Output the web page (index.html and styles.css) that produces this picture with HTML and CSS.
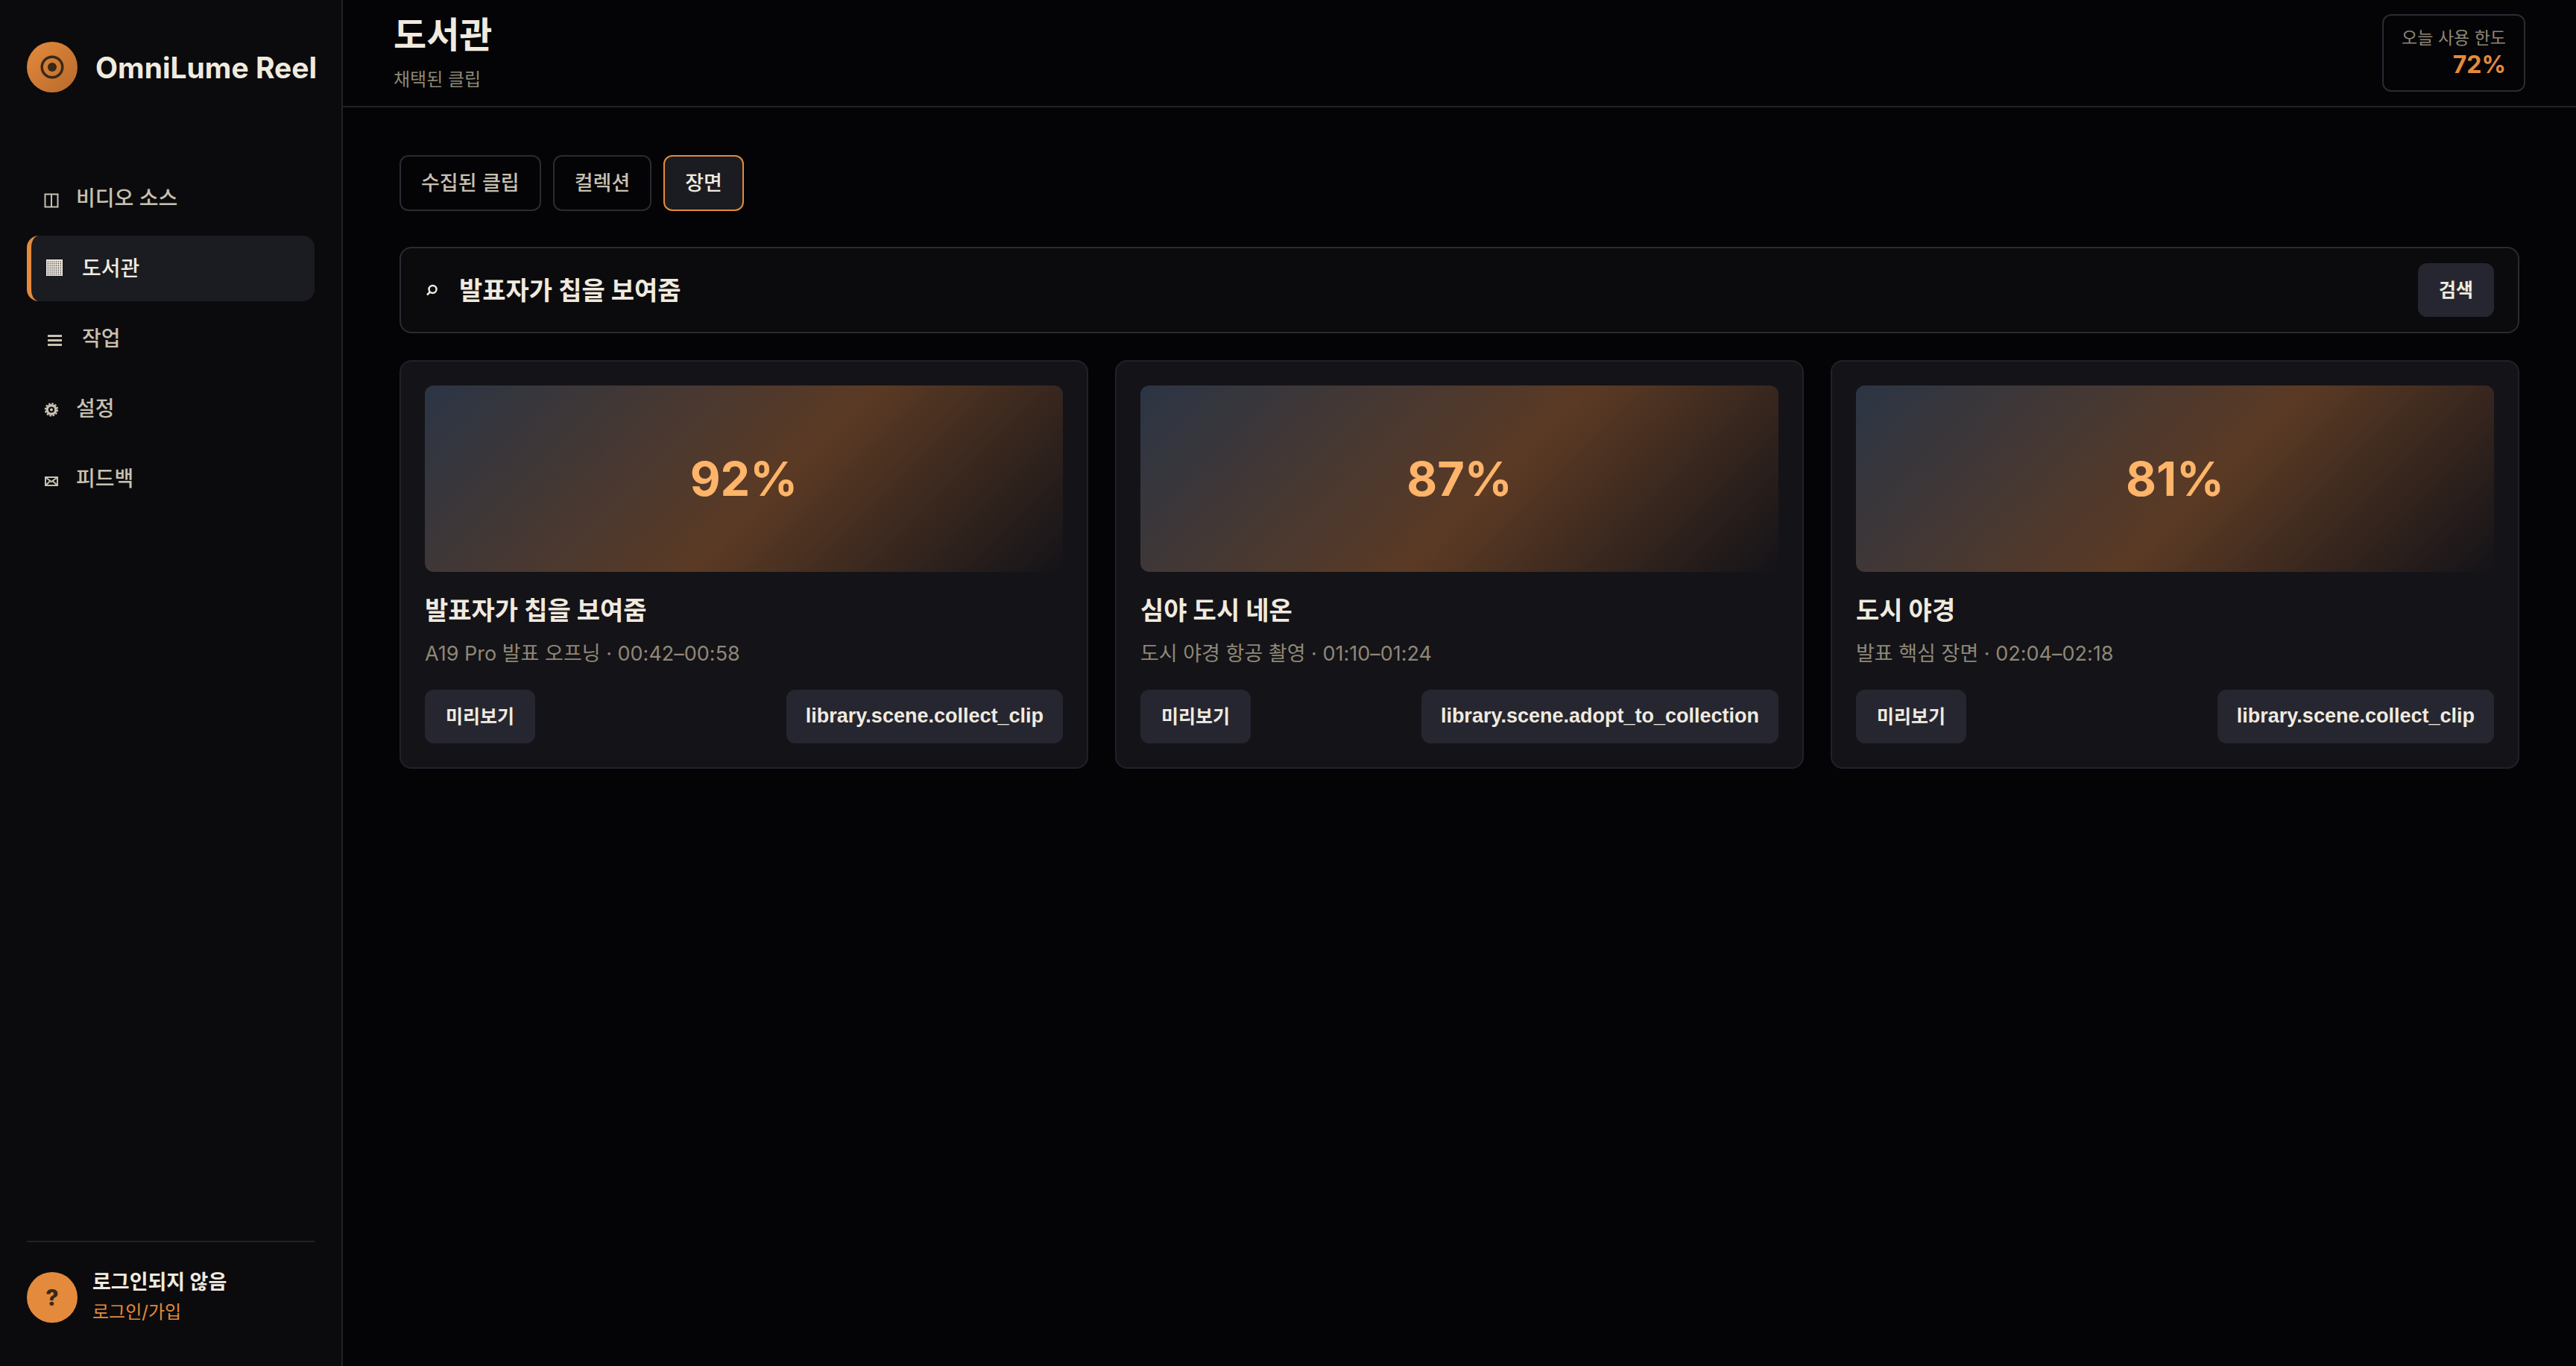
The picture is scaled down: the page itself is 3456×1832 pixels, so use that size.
FILE: index.html
```html
<!DOCTYPE html>
<html lang="ko">
<head>
    <meta charset="UTF-8">
    <meta name="viewport" content="width=device-width, initial-scale=1">
    <title>OmniLume Reel</title>
    <link rel="stylesheet" href="styles.css">
</head>
<body>
    <div class="app">
        <aside class="sidebar">
            <div class="brand">
                <span class="brand-mark">
                    <svg width="32" height="32" viewBox="0 0 32 32">
                        <circle cx="16" cy="16" r="13.8" fill="none" stroke="currentColor" stroke-width="3.5"/>
                        <circle cx="16" cy="16" r="6" fill="currentColor"/>
                    </svg>
                </span>
                <span class="brand-name">OmniLume Reel</span>
            </div>

            <nav class="nav">
                <a class="nav-item" href="#">
                    <svg class="nav-icon" viewBox="0 0 24 32">
                        <path d="M2.5 12.5h17v17h-17zM11 12.5v17" fill="none" stroke="currentColor" stroke-width="2"/>
                    </svg>
                    비디오 소스
                </a>
                <a class="nav-item active" href="#">
                    <svg class="nav-icon wide" viewBox="0 0 32 32">
                        <defs>
                            <pattern id="mesh" x="5" y="7.5" width="2.83" height="2.83" patternUnits="userSpaceOnUse">
                                <rect x="0.7" y="0.7" width="1.3" height="1.3" fill="#1b1c21"/>
                            </pattern>
                        </defs>
                        <path d="M4 6h22v22H4z" fill="currentColor"/>
                        <path d="M5 7.5h20v20H5z" fill="url(#mesh)"/>
                    </svg>
                    도서관
                </a>
                <a class="nav-item" href="#">
                    <svg class="nav-icon wide" viewBox="0 0 32 32">
                        <path d="M6 14.5h19M6 20.5h19M6 26.5h19" stroke="currentColor" stroke-width="3"/>
                    </svg>
                    작업
                </a>
                <a class="nav-item" href="#">
                    <svg class="nav-icon" viewBox="0 0 24 32">
                        <circle cx="11" cy="19.5" r="5.8" fill="none" stroke="currentColor" stroke-width="3.4"/>
                        <circle cx="11" cy="19.5" r="8.2" fill="none" stroke="currentColor" stroke-width="2" stroke-dasharray="2.5 1.8"/>
                        <circle cx="11" cy="19.5" r="2" fill="currentColor"/>
                    </svg>
                    설정
                </a>
                <a class="nav-item" href="#">
                    <svg class="nav-icon" viewBox="0 0 24 32">
                        <path d="M3 16h16v11H3z" fill="none" stroke="currentColor" stroke-width="2"/>
                        <path d="M4 17l7 5 7-5M4 26l5-4.5M18 26l-5-4.5" fill="none" stroke="currentColor" stroke-width="2"/>
                    </svg>
                    피드백
                </a>
            </nav>

            <div class="account">
                <span class="avatar">?</span>
                <div class="account-text">
                    <strong>로그인되지 않음</strong>
                    <a href="#">로그인/가입</a>
                </div>
            </div>
        </aside>

        <div class="main">
            <header class="topbar">
                <div>
                    <h1>도서관</h1>
                    <p class="subtitle">채택된 클립</p>
                </div>
                <div class="quota">
                    <span>오늘 사용 한도</span>
                    <strong>72%</strong>
                </div>
            </header>

            <main class="content">
                <div class="tabs">
                    <button class="tab">수집된 클립</button>
                    <button class="tab">컬렉션</button>
                    <button class="tab active">장면</button>
                </div>

                <form class="search">
                    <svg class="search-icon" viewBox="0 0 18 18">
                        <circle cx="10.5" cy="8" r="5" fill="none" stroke="currentColor" stroke-width="2.5"/>
                        <path d="M7 11.5l-4 4" stroke="currentColor" stroke-width="2.5"/>
                    </svg>
                    <input class="search-input" type="text" aria-label="장면 검색" value="발표자가 칩을 보여줌">
                    <button class="btn" type="button">검색</button>
                </form>

                <section class="cards">
                    <article class="card">
                        <div class="thumb">92%</div>
                        <h2>발표자가 칩을 보여줌</h2>
                        <p class="meta">A19 Pro 발표 오프닝 · 00:42–00:58</p>
                        <div class="actions">
                            <button class="btn">미리보기</button>
                            <button class="btn btn-command">library.scene.collect_clip</button>
                        </div>
                    </article>
                    <article class="card">
                        <div class="thumb">87%</div>
                        <h2>심야 도시 네온</h2>
                        <p class="meta">도시 야경 항공 촬영 · 01:10–01:24</p>
                        <div class="actions">
                            <button class="btn">미리보기</button>
                            <button class="btn btn-command">library.scene.adopt_to_collection</button>
                        </div>
                    </article>
                    <article class="card">
                        <div class="thumb">81%</div>
                        <h2>도시 야경</h2>
                        <p class="meta">발표 핵심 장면 · 02:04–02:18</p>
                        <div class="actions">
                            <button class="btn">미리보기</button>
                            <button class="btn btn-command">library.scene.collect_clip</button>
                        </div>
                    </article>
                </section>
            </main>
        </div>
    </div>
</body>
</html>
```
FILE: styles.css
```css
:root {
    --bg: #040406;
    --panel: #0b0b0d;
    --card: #141318;
    --raised: #1b1c21;
    --button: #262631;
    --line: #22212a;
    --line-strong: #2b2a33;
    --text: #f0eadf;
    --text-soft: #c8c0b0;
    --text-muted: #8f8776;
    --accent: #e48a3c;
    --accent-dark: #3a2817;
}

* {
    box-sizing: border-box;
    margin: 0;
    padding: 0;
}

body {
    background: var(--bg);
    color: var(--text);
    font-family: Inter, "Noto Sans CJK KR", sans-serif;
    font-size: 28px;
}

a {
    color: inherit;
    text-decoration: none;
}

.app {
    display: flex;
    min-height: 100vh;
}

/* Sidebar */
.sidebar {
    width: 460px;
    flex-shrink: 0;
    display: flex;
    flex-direction: column;
    padding: 56px 36px 52px;
    background: var(--panel);
    border-right: 2px solid var(--line);
}

.brand {
    display: flex;
    align-items: center;
    gap: 24px;
    height: 68px;
    margin-bottom: 98px;
}

.brand-mark,
.avatar {
    display: flex;
    align-items: center;
    justify-content: center;
    flex-shrink: 0;
    width: 68px;
    height: 68px;
    border-radius: 50%;
    background: var(--accent);
    color: var(--accent-dark);
}

.brand-mark {
    background: linear-gradient(135deg, #e48a3c, #b8692c);
}

.brand-name {
    font-size: 39px;
    font-weight: 700;
    white-space: nowrap;
}

.nav {
    display: flex;
    flex-direction: column;
    gap: 6px;
}

.nav-item {
    display: flex;
    align-items: center;
    gap: 20px;
    height: 88px;
    padding: 0 16px 4px;
    border-left: 6px solid transparent;
    border-radius: 16px;
    color: var(--text-soft);
    font-weight: 500;
}

.nav-item.active {
    background: var(--raised);
    border-left-color: var(--accent);
    color: var(--text);
}

.nav-icon {
    width: 24px;
    height: 32px;
}

.nav-icon.wide {
    width: 32px;
}

.account {
    display: flex;
    align-items: center;
    gap: 20px;
    margin-top: auto;
    padding-top: 34px;
    border-top: 2px solid var(--line);
}

.avatar {
    font-size: 30px;
    font-weight: 800;
}

.account-text {
    display: flex;
    flex-direction: column;
    font-size: 27px;
    line-height: 40px;
}

.account-text a {
    color: var(--accent);
    font-size: 24px;
}

/* Top bar */
.main {
    flex: 1;
    min-width: 0;
}

.topbar {
    display: flex;
    align-items: center;
    justify-content: space-between;
    height: 144px;
    padding: 0 68px;
    border-bottom: 2px solid var(--line);
}

h1 {
    font-size: 48px;
    font-weight: 700;
    line-height: 64px;
}

.subtitle {
    margin-top: 8px;
    color: var(--text-muted);
    font-size: 24px;
    line-height: 40px;
}

.quota {
    display: flex;
    flex-direction: column;
    justify-content: center;
    height: 104px;
    padding: 0 24px;
    border: 2px solid var(--line-strong);
    border-radius: 12px;
    text-align: right;
}

.quota span {
    color: var(--text-muted);
    font-size: 23px;
    line-height: 32px;
}

.quota strong {
    color: var(--accent);
    font-size: 32px;
    line-height: 40px;
}

/* Library */
.content {
    padding: 64px 76px;
}

.tabs {
    display: flex;
    gap: 16px;
    margin-bottom: 48px;
}

.tab {
    padding: 0 27px 4px;
    height: 75px;
    background: transparent;
    border: 2px solid var(--line-strong);
    border-radius: 12px;
    color: var(--text-soft);
    font-family: "Liberation Sans", "Noto Sans CJK KR", sans-serif;
    font-size: 27px;
    font-weight: 500;
}

.tab.active {
    background: var(--raised);
    border-color: var(--accent);
    color: var(--text);
}

.search {
    display: flex;
    align-items: center;
    margin-bottom: 36px;
    padding: 20px 32px;
    background: var(--panel);
    border: 2px solid var(--line-strong);
    border-radius: 16px;
}

.search-icon {
    width: 18px;
    height: 18px;
    margin-right: 28px;
}

.search-input {
    flex: 1;
    min-width: 0;
    padding-bottom: 4px;
    background: none;
    border: none;
    outline: none;
    color: var(--text);
    font-family: inherit;
    font-size: 34px;
    font-weight: 700;
}

.btn {
    height: 72px;
    padding: 0 28px 4px;
    background: var(--button);
    border: none;
    border-radius: 12px;
    color: var(--text);
    font-family: "Liberation Sans", "Noto Sans CJK KR", sans-serif;
    font-size: 25px;
    font-weight: 700;
}

.btn-command {
    padding: 0 26px 2px;
    font-size: 27px;
}

.cards {
    display: grid;
    grid-template-columns: repeat(3, 1fr);
    gap: 36px;
}

.card {
    padding: 32px;
    background: var(--card);
    border: 2px solid var(--line);
    border-radius: 16px;
}

.thumb {
    display: flex;
    align-items: center;
    justify-content: center;
    height: 250px;
    margin-bottom: 26px;
    border-radius: 12px;
    background: linear-gradient(135deg, #2b3545, #5b3a24 55%, #141318);
    color: #ffb469;
    font-size: 63px;
    font-weight: 700;
}

h2 {
    font-size: 34px;
    font-weight: 700;
    line-height: 52px;
}

.meta {
    margin: 10px 0 26px;
    color: var(--text-muted);
    font-size: 27px;
    line-height: 44px;
}

.actions {
    display: flex;
    justify-content: space-between;
}
```
